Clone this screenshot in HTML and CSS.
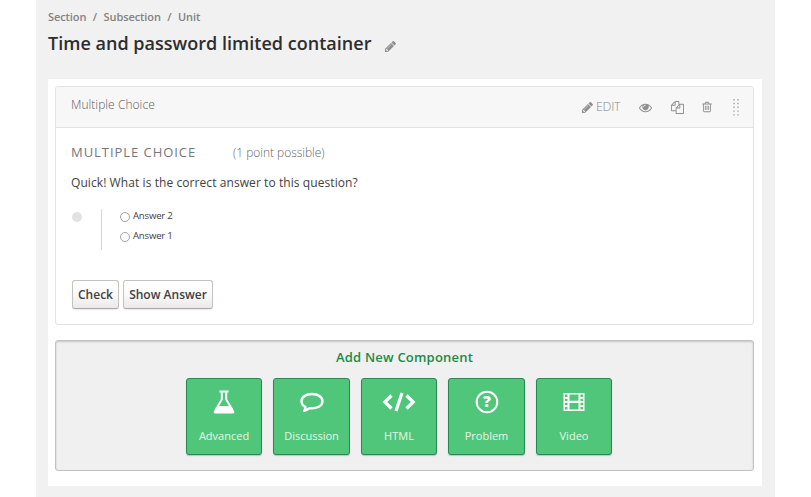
FILE: index.html
```html
<!DOCTYPE html>
<html lang="en">
<head>
<meta charset="utf-8">
<title>Time and password limited container</title>
<link rel="stylesheet" href="styles.css">
</head>
<body>
<div class="page">
  <nav class="crumbs"><span>Section</span><span>/</span><span>Subsection</span><span>/</span><span>Unit</span></nav>
  <div class="title-row">
    <h1>Time and password limited container</h1>
    <svg class="icon title-edit" viewBox="0 0 1792 1792"><path d="M491 1536l91-91-235-235-91 91v107h128v128h107zm523-928q0-22-22-22-10 0-17 7l-542 542q-7 7-7 17 0 22 22 22 10 0 17-7l542-542q7-7 7-17zm-54-192l416 416-832 832h-416v-416zm683 96q0 53-37 90l-166 166-416-416 166-165q36-38 90-38 53 0 91 38l235 234q37 39 37 91z"/></svg>
  </div>
  <main class="content">
    <section class="card">
      <header class="card-head">
        <span class="card-name">Multiple Choice</span>
        <div class="actions">
          <svg class="icon pencil" viewBox="0 0 1792 1792"><path d="M491 1536l91-91-235-235-91 91v107h128v128h107zm523-928q0-22-22-22-10 0-17 7l-542 542q-7 7-7 17 0 22 22 22 10 0 17-7l542-542q7-7 7-17zm-54-192l416 416-832 832h-416v-416zm683 96q0 53-37 90l-166 166-416-416 166-165q36-38 90-38 53 0 91 38l235 234q37 39 37 91z"/></svg>
          <span class="edit">EDIT</span>
          <svg class="icon eye" viewBox="0 0 1792 1792"><path d="M1664 960q-152-236-381-353 61 104 61 225 0 185-131.500 316.500t-316.500 131.500-316.500-131.500-131.500-316.500q0-121 61-225-229 117-381 353 133 205 333.500 326.500t434.500 121.500 434.500-121.500 333.500-326.500zm-720-384q0-20-14-34t-34-14q-125 0-214.500 89.500t-89.500 214.500q0 20 14 34t34 14 34-14 14-34q0-86 61-147t147-61q20 0 34-14t14-34zm848 384q0 34-20 69-140 230-376.500 368.500t-499.500 138.500-499.500-139-376.500-368q-20-35-20-69t20-69q140-229 376.500-368t499.500-139 499.500 139 376.500 368q20 35 20 69z"/></svg>
          <svg class="icon copy" viewBox="0 0 1792 1792"><path d="M1696 384q40 0 68 28t28 68v1216q0 40-28 68t-68 28h-960q-40 0-68-28t-28-68v-288h-544q-40 0-68-28t-28-68v-672q0-40 20-88t48-76l408-408q28-28 76-48t88-20h416q40 0 68 28t28 68v328q68-40 128-40h416zm-544 213l-299 299h299v-299zm-640-384l-299 299h299v-299zm196 647l316-316v-416h-384v416q0 40-28 68t-68 28h-416v640h512v-256q0-40 20-88t48-76zm956 804v-1152h-384v416q0 40-28 68t-68 28h-416v640h896z"/></svg>
          <svg class="icon trash" viewBox="0 0 1792 1792"><path d="M704 736v576q0 14-9 23t-23 9h-64q-14 0-23-9t-9-23v-576q0-14 9-23t23-9h64q14 0 23 9t9 23zm256 0v576q0 14-9 23t-23 9h-64q-14 0-23-9t-9-23v-576q0-14 9-23t23-9h64q14 0 23 9t9 23zm256 0v576q0 14-9 23t-23 9h-64q-14 0-23-9t-9-23v-576q0-14 9-23t23-9h64q14 0 23 9t9 23zm128 724v-948h-896v948q0 22 7 40.500t14.500 27 10.500 8.500h832q3 0 10.500-8.500t14.500-27 7-40.500zm-672-1076h448l-48-117q-7-9-17-11h-317q-10 2-17 11zm928 32v64q0 14-9 23t-23 9h-96v948q0 83-47 143.500t-113 60.500h-832q-66 0-113-58.500t-47-141.500v-952h-96q-14 0-23-9t-9-23v-64q0-14 9-23t23-9h309l70-167q15-37 54-63t79-26h320q40 0 79 26t54 63l70 167h309q14 0 23 9t9 23z"/></svg>
          <svg class="grip" viewBox="0 0 6 18"><path d="M1 1v17M5 1v17"/></svg>
        </div>
      </header>
      <div class="problem">
        <div class="problem-head"><h2>MULTIPLE CHOICE</h2><span class="points">(1 point possible)</span></div>
        <p class="question">Quick! What is the correct answer to this question?</p>
        <div class="answers">
          <span class="status"></span>
          <div class="choices">
            <label><span class="radio"></span><span>Answer 2</span></label>
            <label><span class="radio"></span><span>Answer 1</span></label>
          </div>
        </div>
        <div class="buttons"><button class="check">Check</button><button class="show">Show Answer</button></div>
      </div>
    </section>
    <section class="add">
      <h3>Add New Component</h3>
      <div class="tiles">
        <button class="tile"><svg viewBox="0 0 34 26"><path class="line" d="M12.500 2.500H21.500M14.800 2.500V10.500L8.500 21M19.200 2.500V10.500L25.500 21"/><path class="solid" d="M10.500 17H23.500L27 22Q28 24.500 25.500 24.500H8.500Q6 24.500 7 22Z"/></svg><span>Advanced</span></button>
        <button class="tile"><svg viewBox="0 0 34 26"><path class="bubble" d="M17 5C11 5 6.500 8 6.500 12.200C6.500 14.800 8 16.700 10.500 18C10.500 19.600 10 20.600 9.200 21.800C11.500 21.200 13.200 20.300 14.500 19.100C22 20 27.500 16.800 27.500 12.200C27.500 8 23 5 17 5Z"/></svg><span>Discussion</span></button>
        <button class="tile"><svg viewBox="0 0 34 26"><path class="code" d="M9.500 6.500L2.800 13L9.500 19.500M24.500 6.500L31.200 13L24.500 19.500M20 4L14 22"/></svg><span>HTML</span></button>
        <button class="tile"><svg viewBox="0 0 34 26"><circle class="line" cx="17" cy="13" r="10.300"/><text x="17" y="18.400" text-anchor="middle">?</text></svg><span>Problem</span></button>
        <button class="tile"><svg viewBox="0 0 34 26"><path class="solid" fill-rule="evenodd" d="M6.500 4H27.500V22H6.500ZM8 5.500V8H10.500V5.500ZM8 9.700V12H10.500V9.700ZM8 13.800V16.200H10.500V13.800ZM8 18V20.500H10.500V18ZM23.500 5.500V8H26V5.500ZM23.500 9.700V12H26V9.700ZM23.500 13.800V16.200H26V13.800ZM23.500 18V20.500H26V18ZM12.500 5.500V11.800H21.500V5.500ZM12.500 14V20.500H21.500V14Z"/></svg><span>Video</span></button>
      </div>
    </section>
  </main>
</div>
</body>
</html>
```
FILE: styles.css
```css
* { box-sizing: border-box; }
body {
  margin: 0;
  background: #fff;
  font-family: "Open Sans", "Noto Sans", sans-serif;
  color: #414141;
}
h1, h2, h3, p { margin: 0; }
.page {
  width: 739px;
  height: 497px;
  margin-left: 36px;
  padding: 9px 13px 0 12px;
  background: #f1f1f1;
}
.crumbs {
  display: flex;
  gap: 6.500px;
  height: 16px;
  font-size: 11px;
  line-height: 16px;
  font-weight: 600;
  letter-spacing: -.09px;
  color: #828282;
}
.title-row { display: flex; height: 54px; padding-top: 5px; }
h1 {
  font-size: 18px;
  line-height: 26px;
  font-weight: 600;
  letter-spacing: .02px;
  color: #2d2d2d;
  white-space: nowrap;
}
.icon { fill: #8f8f8f; flex: none; }
.title-edit { width: 13px; height: 13px; margin: 10px 0 0 13px; }
.content {
  height: 407px;
  padding: 7px 8px 0 7px;
  background: #fff;
}
.card {
  height: 239px;
  border: 1px solid #e3e3e3;
  border-radius: 3px;
}
.card-head {
  display: flex;
  justify-content: space-between;
  height: 41px;
  padding: 0 14px 0 15px;
  border-bottom: 1px solid #e3e3e3;
  border-radius: 2px 2px 0 0;
  background: #f7f7f7;
}
.card-name { font-size: 12px; line-height: 36px; font-weight: 300; letter-spacing: .05px; color: #5c5c5c; }
.actions { display: flex; align-items: center; }
.pencil { width: 13px; height: 13px; margin-right: 2px; }
.edit { width: 25px; font-size: 12.500px; font-weight: 300; letter-spacing: -.3px; color: #8a8a8a; line-height: 18px; }
.eye { width: 13px; height: 13px; margin-left: 18px; }
.copy { width: 13px; height: 13px; margin-left: 19px; }
.trash { width: 12px; height: 12px; margin-left: 17px; }
.grip { width: 6px; height: 18px; margin-left: 20px; }
.grip path { stroke: #aaa; stroke-width: 1.5; stroke-dasharray: 1.4 2.4; fill: none; }
.problem { padding: 13px 15px 0; }
.problem-head { display: flex; height: 23px; line-height: 23px; }
h2 { width: 162px; font-size: 13px; font-weight: 400; letter-spacing: .95px; color: #777; }
.points { font-size: 12px; font-weight: 300; letter-spacing: -.03px; color: #666; }
.question { margin-top: 9px; font-size: 12px; line-height: 20px; letter-spacing: .08px; }
.answers { display: flex; height: 41px; margin-top: 16px; }
.status { width: 10px; height: 10px; margin: 3px 19px 0 1px; border-radius: 50%; background: #e2e2e2; }
.choices { padding-left: 18px; border-left: 1px solid #d8d8d8; }
.choices label { display: flex; height: 20px; font-size: 9.600px; line-height: 13px; letter-spacing: -.2px; }
.radio {
  width: 10px;
  height: 10px;
  margin: 3px 3px 0 0;
  border: 1px solid #a3a3a3;
  border-radius: 50%;
}
.buttons { display: flex; gap: 4px; margin: 30px 0 0 1px; }
button { font-family: inherit; padding: 0; }
.check, .show {
  height: 29px;
  border: 1px solid #c4c1bf;
  border-bottom-color: #aaa;
  border-radius: 3px;
  background: linear-gradient(#fff, #fafafa 50%, #ebe9e8);
  box-shadow: 0 1px 1px rgba(0, 0, 0, .08);
  font-size: 12px;
  font-weight: 600;
  color: #414141;
}
.check { width: 47px; }
.show { width: 90px; }
.add {
  height: 131px;
  margin-top: 15px;
  padding-top: 6px;
  border: 1px solid #c2c2c2;
  border-radius: 3px;
  background: #f0f0f0;
  box-shadow: inset 0 1px 2px rgba(0, 0, 0, .18);
}
h3 { height: 22px; font-size: 13px; line-height: 20px; font-weight: 600; letter-spacing: .2px; text-align: center; color: #178c48; }
.tiles { display: flex; justify-content: center; gap: 11px; margin-top: 9px; padding-right: 11px; }
.tile {
  display: flex;
  flex-direction: column;
  align-items: center;
  width: 76.500px;
  height: 77px;
  padding-top: 10px;
  border: 1px solid #2a8751;
  border-radius: 3px;
  background: #50c67b;
  box-shadow: 0 1px 1px rgba(0, 0, 0, .2);
  color: #e5f7eb;
  font-size: 11px;
  line-height: 16px;
}
.tile svg { width: 34px; height: 26px; margin-bottom: 13px; }
.tile text { fill: #fff; font: 800 15px "Open Sans", sans-serif; }
.solid { fill: #fff; }
.line { fill: none; stroke: #fff; stroke-width: 2; }
.bubble { fill: none; stroke: #fff; stroke-width: 2.400; stroke-linejoin: round; }
.code { fill: none; stroke: #fff; stroke-width: 3.200; }
```
